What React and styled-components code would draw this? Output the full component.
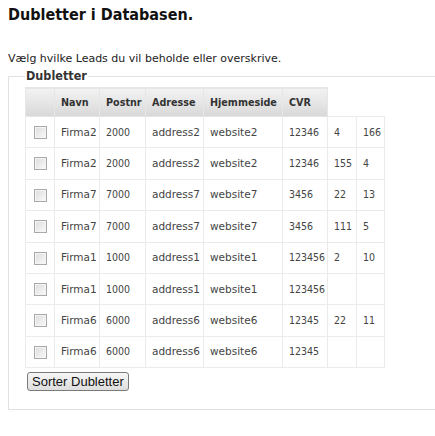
import React from "react";
import styled, { createGlobalStyle } from "styled-components";

const GlobalStyle = createGlobalStyle`
  html, body {
    margin: 0;
    padding: 0;
    background: #fff;
    overflow: hidden;
  }
  body {
    font-family: "DejaVu Sans", Verdana, sans-serif;
    color: #333;
  }
`;

const Page = styled.div`
  padding: 0 0 0 8px;
`;

const Title = styled.h2`
  margin: 5px 0 0;
  font-family: "DejaVu Sans Condensed", "DejaVu Sans", sans-serif;
  font-size: 16px;
  line-height: 20px;
  font-weight: bold;
  color: #111;
`;

const Intro = styled.p`
  margin: 27px 0 0;
  font-size: 11px;
  line-height: 14px;
  color: #222;
`;

const Box = styled.fieldset`
  margin: 3px 0 0;
  padding: 4px 16px 18px;
  border: 1px solid #e2e2e2;
  border-right: none;
`;

const Legend = styled.legend`
  padding: 0 1px;
  font-family: "DejaVu Sans Condensed", "DejaVu Sans", sans-serif;
  font-size: 12.5px;
  line-height: 14px;
  font-weight: bold;
  color: #333;
`;

const Table = styled.table`
  border-collapse: collapse;
  table-layout: fixed;
  width: 359px;
  color: #444;
`;

const Head = styled.th`
  height: 28px;
  padding: 0 0 0 6px;
  text-align: left;
  white-space: nowrap;
  font-family: "DejaVu Sans Condensed", "DejaVu Sans", sans-serif;
  font-size: 10.7px;
  font-weight: bold;
  color: #333;
  background: linear-gradient(#f3f3f3, #d8d8d8);
  border: 1px solid #e6e6e6;
`;

const Cell = styled.td`
  height: 30.4px;
  padding: 0 0 0 6px;
  line-height: 13px;
  white-space: nowrap;
  font-family: ${(p) =>
    p.$num
      ? `"DejaVu Sans Condensed", "DejaVu Sans", sans-serif`
      : `"DejaVu Sans", Verdana, sans-serif`};
  font-size: 10.5px;
  border: 1px solid #ebebeb;
  text-align: ${(p) => (p.$center ? "center" : "left")};
`;

const Check = styled.input.attrs({ type: "checkbox" })`
  appearance: none;
  margin: 0 0 0 -6px;
  width: 13px;
  height: 13px;
  vertical-align: middle;
  border: 1px solid #a9a9a9;
  background: linear-gradient(135deg, #dcdcdc, #fafafa);
  box-shadow: inset 0 0 0 1px #f4f4f4;
`;

const Button = styled.button`
  margin: 4px 0 0 2px;
  height: 19px;
  padding: 0 4px;
  font-family: "Liberation Sans", Arial, sans-serif;
  font-size: 13px;
  line-height: 17px;
  color: #111;
  border: 1px solid #7a7a7a;
  border-radius: 3px;
  background: linear-gradient(#f6f6f6, #dedede);
`;

const widths = [29, 45, 46, 58, 79, 45, 29, 28];
const numeric = [false, true, false, false, true, true, true];

const rows = [
  ["Firma2", "2000", "address2", "website2", "12346", "4", "166"],
  ["Firma2", "2000", "address2", "website2", "12346", "155", "4"],
  ["Firma7", "7000", "address7", "website7", "3456", "22", "13"],
  ["Firma7", "7000", "address7", "website7", "3456", "111", "5"],
  ["Firma1", "1000", "address1", "website1", "123456", "2", "10"],
  ["Firma1", "1000", "address1", "website1", "123456", "", ""],
  ["Firma6", "6000", "address6", "website6", "12345", "22", "11"],
  ["Firma6", "6000", "address6", "website6", "12345", "", ""],
];

function App() {
  return (
    <Page>
      <GlobalStyle />
      <Title>Dubletter i Databasen.</Title>
      <Intro>Vælg hvilke Leads du vil beholde eller overskrive.</Intro>
      <Box>
        <Legend>Dubletter</Legend>
        <Table>
          <colgroup>
            {widths.map((w, i) => (
              <col key={i} style={{ width: w }} />
            ))}
          </colgroup>
          <thead>
            <tr>
              <Head></Head>
              <Head>Navn</Head>
              <Head>Postnr</Head>
              <Head>Adresse</Head>
              <Head>Hjemmeside</Head>
              <Head>CVR</Head>
            </tr>
          </thead>
          <tbody>
            {rows.map((r, i) => (
              <tr key={i}>
                <Cell $center>
                  <Check />
                </Cell>
                {r.map((v, j) => (
                  <Cell key={j} $num={numeric[j]}>
                    {v}
                  </Cell>
                ))}
              </tr>
            ))}
          </tbody>
        </Table>
        <Button>Sorter Dubletter</Button>
      </Box>
    </Page>
  );
}

export default App;
